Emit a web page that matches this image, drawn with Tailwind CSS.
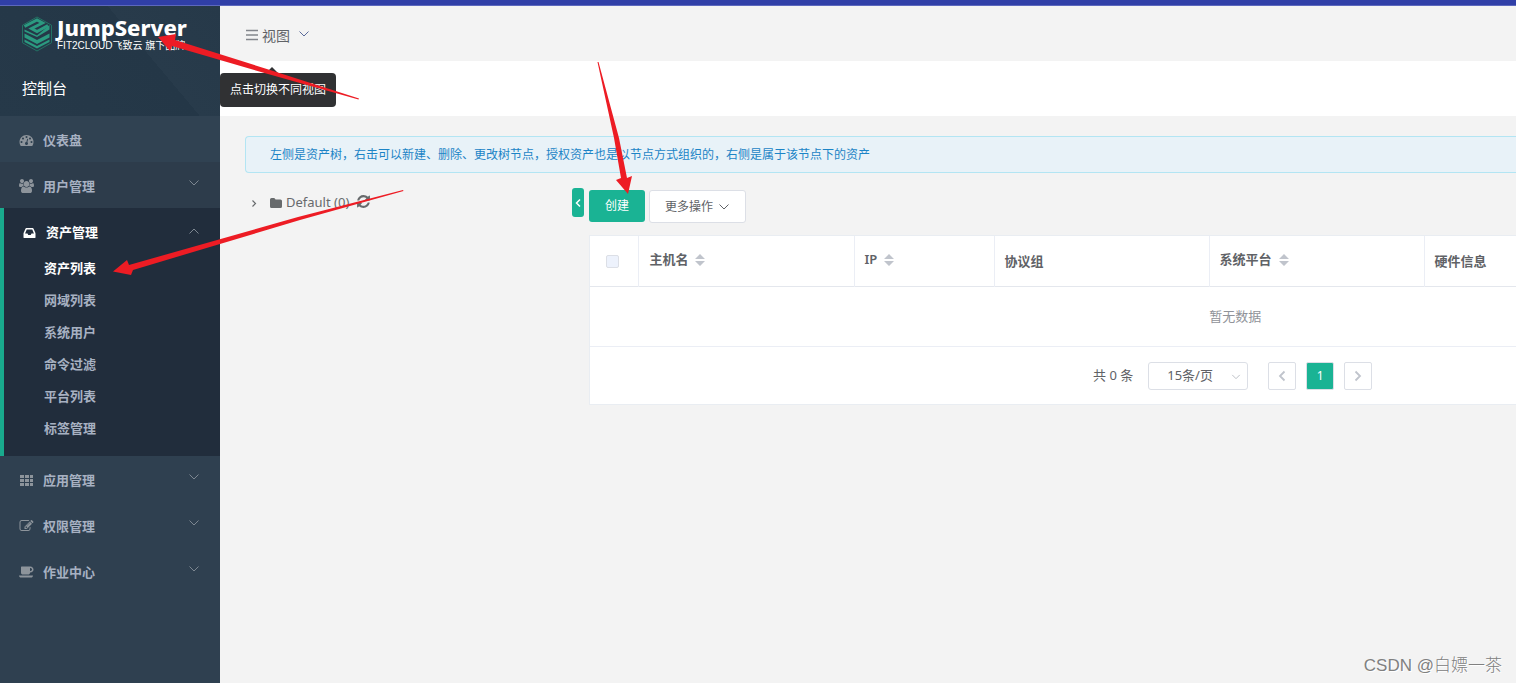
<!DOCTYPE html>
<html lang="zh-CN">
<head>
<meta charset="utf-8">
<title>JumpServer</title>
<meta name="viewport" content="width=device-width, initial-scale=1">
<script src="https://cdn.jsdelivr.net/npm/@tailwindcss/browser@4"></script>
</head>
<body class="relative flex min-h-screen flex-col overflow-x-hidden bg-[#f3f3f3] font-['Noto_Sans','Noto_Sans_CJK_SC',sans-serif] text-[13px] text-[#606266]">
<svg class="hidden" aria-hidden="true">
  <symbol id="down" viewBox="0 0 12 12"><path d="M1.500 3.500 6 8 10.500 3.500" fill="none" stroke="currentColor"/></symbol>
  <symbol id="sort" viewBox="0 0 10 12"><path d="M5 0 10 5H0zM5 12 0 7h10z" fill="#c0c4cc"/></symbol>
</svg>
<div class="h-[6px] shrink-0 border-b border-[#5c68bd] bg-[#303fa7]"></div>
<div class="flex grow">
  <aside class="w-[220px] shrink-0 bg-[#2f4050] font-semibold text-[#a7b1c2]">
    <div class="flex h-[110px] flex-col bg-[linear-gradient(50deg,#263949_0%,#243747_64%,#283b4b_64%,#263949_100%)] font-normal text-white">
      <a href="#" class="flex h-[55px] items-center gap-1 pl-[21px]">
        <svg class="h-[36px] w-[32px] shrink-0" viewBox="0 0 32 36" aria-hidden="true">
          <path d="M16 1 30.500 9.200V26.800L16 35 1.500 26.800V9.200z" fill="none" stroke="#237264"/>
          <path d="M24 8 16 4 4 10.500 8 13 16 9 12 13.500 16 15.500 28 10V14L16 20.500 4 14.500V16L16 22V19.500L25.500 14 21 11.500 14 14.500 20 8z" fill="none"/>
          <path d="M3.500 10.500 16 4 21.500 7 10.500 12.500 16 15.500 27 9.500" fill="none" stroke="#2b9a80" stroke-width="3"/>
          <g fill="#2b9a80"><path d="M3.500 13.500 16 19.500 28.500 9V13.500L16 21 3.500 15.500z"/><path d="M3.500 17.500 16 24 28.500 17.500V21.500L16 28 3.500 21.500z"/><path d="M3.500 23.500 16 30 28.500 23.500V26L16 32.500 3.500 26z"/></g>
        </svg>
        <span class="flex flex-col whitespace-nowrap">
          <span class="text-[22px] leading-[24px] font-extrabold">JumpServer</span>
          <span class="font-['Liberation_Sans','Noto_Sans_CJK_SC',sans-serif] text-[10px] leading-[14px]">FIT2CLOUD飞致云 旗下品牌</span>
        </span>
      </a>
      <div class="flex h-[55px] items-center pl-[22px] text-[15px]">控制台</div>
    </div>
    <nav>
      <a href="#" class="flex h-[46px] items-center gap-[9px] bg-[#304252] pt-1 pr-5 pl-[19px]">
        <svg class="mb-[2px] h-[14px] w-[15px] text-[#8d949b]" viewBox="0 0 1792 1792" fill="currentColor" aria-hidden="true"><path d="M384 1152q0-53-37.500-90.500t-90.500-37.500-90.500 37.500-37.500 90.500 37.500 90.500 90.500 37.500 90.500-37.500 37.500-90.500zm192-448q0-53-37.500-90.500t-90.500-37.500-90.500 37.500-37.500 90.500 37.500 90.500 90.500 37.500 90.500-37.500 37.500-90.500zm428 481l101-382q6-26-7.500-48.500t-38.500-29.500-48 6.500-30 39.500l-101 382q-60 5-107 43.500t-63 98.500q-20 77 20 146t117 89 146-20 89-117q16-60-6-117t-72-91zm660-33q0-53-37.500-90.500t-90.500-37.500-90.500 37.500-37.500 90.500 37.500 90.500 90.500 37.500 90.500-37.500 37.500-90.500zm-640-640q0-53-37.500-90.500t-90.500-37.500-90.500 37.500-37.500 90.500 37.500 90.500 90.500 37.500 90.500-37.500 37.500-90.500zm448 192q0-53-37.500-90.500t-90.500-37.500-90.500 37.500-37.500 90.500 37.500 90.500 90.500 37.500 90.500-37.500 37.500-90.500zm320 448q0 261-141 483-19 29-54 29h-1402q-35 0-54-29-141-221-141-483 0-182 71-348t191-286 286-191 348-71 348 71 286 191 191 286 71 348z"/></svg>
        <span>仪表盘</span>
      </a>
      <a href="#" class="flex h-[46px] items-center gap-[9px] bg-[#2d3c4b] pt-1 pr-5 pl-[19px]">
        <svg class="mb-[2px] h-[14px] w-[15px] text-[#8d949b]" viewBox="0 0 1920 1792" fill="currentColor" aria-hidden="true"><path d="M593 896q-162 5-265 128h-134q-82 0-138-40.500t-56-118.500q0-353 124-353 6 0 43.500 21t97.500 42.500 119 21.500q67 0 133-23-5 37-5 66 0 139 81 256zm1071 637q0 120-73 189.500t-194 69.500h-874q-121 0-194-69.500t-73-189.500q0-53 3.500-103.500t14-109 26.500-108.500 43-97.500 62-81 85.500-53.500 111.500-20q10 0 43 21.500t73 48 107 48 135 21.500 135-21.500 107-48 73-48 43-21.500q61 0 111.500 20t85.500 53.500 62 81 43 97.500 26.500 108.500 14 109 3.500 103.500zm-1024-1277q0 106-75 181t-181 75-181-75-75-181 75-181 181-75 181 75 75 181zm704 384q0 159-112.500 271.500t-271.500 112.500-271.500-112.500-112.500-271.500 112.500-271.500 271.500-112.500 271.500 112.500 112.500 271.500zm576 225q0 78-56 118.500t-138 40.500h-134q-103-123-265-128 81-117 81-256 0-29-5-66 66 23 133 23 59 0 119-21.500t97.500-42.500 43.500-21q124 0 124 353zm-128-609q0 106-75 181t-181 75-181-75-75-181 75-181 181-75 181 75 75 181z"/></svg>
        <span>用户管理</span><svg class="mb-2 ml-auto size-3 text-[#7d8791]" aria-hidden="true"><use href="#down"/></svg>
      </a>
      <div class="border-l-4 border-[#19aa8d] bg-[#212d3c] pb-[11px]">
        <a href="#" class="flex h-[45px] items-center gap-[9px] pt-1 pr-5 pl-[18px] text-white">
          <svg class="h-[14px] w-[15px]" viewBox="0 0 1792 1792" fill="currentColor" aria-hidden="true"><path d="M1151 960h316q-1-3-2.500-8.500t-2.500-7.500l-212-496h-708l-212 496q-1 3-2.500 8.500t-2.500 7.500h316l95 192h320zm513 30v482q0 26-19 45t-45 19h-1408q-26 0-45-19t-19-45v-482q0-62 25-123l238-552q10-25 36.500-42t52.500-17h832q26 0 52.500 17t36.500 42l238 552q25 61 25 123z"/></svg>
          <span>资产管理</span><svg class="mb-1 ml-auto size-3 rotate-180 text-[#7d8791]" aria-hidden="true"><use href="#down"/></svg>
        </a>
        <a href="#" class="flex h-8 items-center pl-10 text-white">资产列表</a>
        <a href="#" class="flex h-8 items-center pl-10">网域列表</a>
        <a href="#" class="flex h-8 items-center pl-10">系统用户</a>
        <a href="#" class="flex h-8 items-center pl-10">命令过滤</a>
        <a href="#" class="flex h-8 items-center pl-10">平台列表</a>
        <a href="#" class="flex h-8 items-center pl-10">标签管理</a>
      </div>
      <a href="#" class="flex h-[46px] items-center gap-[9px] pt-1 pr-5 pl-[19px]">
        <svg class="mb-[2px] h-[13px] w-[15px] text-[#8d949b]" viewBox="0 0 15 13" fill="currentColor" aria-hidden="true"><path d="M1 1h4v3H1zM6 1h4v3H6zM11 1h3v3h-3zM1 5h4v3H1zM6 5h4v3H6zM11 5h3v3h-3zM1 9h4v3H1zM6 9h4v3H6zM11 9h3v3h-3z"/></svg>
        <span>应用管理</span><svg class="mb-2 ml-auto size-3 text-[#7d8791]" aria-hidden="true"><use href="#down"/></svg>
      </a>
      <a href="#" class="flex h-[46px] items-center gap-[9px] pt-1 pr-5 pl-[19px]">
        <svg class="mb-[2px] h-[14px] w-[15px] text-[#8d949b]" viewBox="0 0 1792 1792" fill="currentColor" aria-hidden="true"><path d="M888 1184l116-116-152-152-116 116v56h96v96h56zm440-720q-16-16-33 1l-350 350q-17 17-1 33t33-1l350-350q17-17 1-33zm80 594v190q0 119-84.500 203.500t-203.500 84.500h-832q-119 0-203.500-84.500t-84.500-203.500v-832q0-119 84.500-203.500t203.500-84.500h832q63 0 117 25 15 7 18 23 3 17-9 29l-49 49q-14 14-32 8-23-6-45-6h-832q-66 0-113 47t-47 113v832q0 66 47 113t113 47h832q66 0 113-47t47-113v-126q0-13 9-22l64-64q15-15 35-7t20 29zm-96-738l288 288-672 672h-288v-288zm444 132l-92 92-288-288 92-92q28-28 68-28t68 28l152 152q28 28 28 68t-28 68z"/></svg>
        <span>权限管理</span><svg class="mb-2 ml-auto size-3 text-[#7d8791]" aria-hidden="true"><use href="#down"/></svg>
      </a>
      <a href="#" class="flex h-[46px] items-center gap-[9px] pt-1 pr-5 pl-[19px]">
        <svg class="mb-[2px] h-[14px] w-[15px] text-[#8d949b]" viewBox="0 0 1920 1792" fill="currentColor" aria-hidden="true"><path d="M1664 576q0-80-56-136t-136-56h-64v384h64q80 0 136-56t56-136zm-1664 768h1792q0 106-75 181t-181 75h-1280q-106 0-181-75t-75-181zm1856-768q0 159-112.500 271.500t-271.500 112.500h-64v32q0 92-66 158t-158 66h-704q-92 0-158-66t-66-158v-736q0-26 19-45t45-19h1152q159 0 271.500 112.500t112.500 271.500z"/></svg>
        <span>作业中心</span><svg class="mb-2 ml-auto size-3 text-[#7d8791]" aria-hidden="true"><use href="#down"/></svg>
      </a>
    </nav>
  </aside>

  <div class="flex min-w-0 grow flex-col">
    <header class="flex h-[55px] items-center pt-1 pl-[26px]">
      <div class="relative">
        <button type="button" aria-describedby="view-tip" class="flex items-center text-[14px] text-[#606266]">
          <svg class="mr-1 mb-[2px] h-3 w-3" viewBox="0 0 12 12" aria-hidden="true"><path d="M0 1.500h12M0 6h12M0 10.500h12" stroke="#83868c" stroke-width="1.600"/></svg>
          <span>视图</span><svg class="mb-1 ml-2 size-3 text-[#5a6a9a]" aria-hidden="true"><use href="#down"/></svg>
        </button>
        <div id="view-tip" role="tooltip" class="absolute top-[48px] left-[-26px] z-10 flex h-[34px] w-[116px] items-center justify-center rounded-[4px] bg-[#303133] text-[12px] whitespace-nowrap text-white">
          <svg class="absolute top-[-6px] left-[46px] h-[6px] w-3" viewBox="0 0 12 6" aria-hidden="true"><path d="M0 6 6 0l6 6z" fill="#303133"/></svg>
          点击切换不同视图
        </div>
      </div>
    </header>
    <div class="h-[55px] bg-white"></div>
    <main class="min-w-0 grow overflow-hidden pt-5 pl-[25px]">
      <div role="alert" class="flex h-[37px] items-center rounded-l-[4px] border border-r-0 border-[#b3e5f3] bg-[#e8f2f8] pl-6 text-[12px] text-[#1c84c6]">左侧是资产树，右击可以新建、删除、更改树节点，授权资产也是以节点方式组织的，右侧是属于该节点下的资产</div>
      <div class="flex pt-[15px]">
        <div class="flex h-[29px] w-[327px] shrink-0 items-center pl-1 text-[#676a6c]">
          <svg class="mr-2 size-[10px]" viewBox="0 0 10 10" aria-hidden="true"><path d="M3.500 2.500 6.500 5.500 3.500 8.500" fill="none" stroke="currentColor" stroke-width="1.200"/></svg>
          <svg class="mx-[3px] h-[10px] w-[12px]" viewBox="0 0 12 10" aria-hidden="true"><path d="M0 1.500Q0 0 1.500 0H4Q5 0 5.500 1.500H10.500Q12 1.500 12 3V8.500Q12 10 10.500 10H1.500Q0 10 0 8.500z" fill="currentColor"/></svg>
          <a href="#" class="ml-[1px]">Default (0)</a>
          <button type="button" aria-label="刷新" class="mb-[2px] ml-[7px]"><svg class="size-[15px]" viewBox="0 0 1792 1792" fill="currentColor" aria-hidden="true"><path d="M1639 1056q0 5-1 7-64 268-268 434.500t-478 166.500q-146 0-282.500-55t-243.500-157l-129 129q-19 19-45 19t-45-19-19-45v-448q0-26 19-45t45-19h448q26 0 45 19t19 45-19 45l-137 137q71 66 161 102t187 36q134 0 250-65t186-179q11-17 53-117 8-23 30-23h192q13 0 22.500 9.500t9.500 22.500zm25-800v448q0 26-19 45t-45 19h-448q-26 0-45-19t-19-45 19-45l138-138q-148-137-349-137-134 0-250 65t-186 179q-11 17-53 117-8 23-30 23h-199q-13 0-22.500-9.500t-9.500-22.500v-7q65-268 270-434.500t480-166.500q146 0 284 55.500t245 156.500l130-129q19-19 45-19t45 19 19 45z"/></svg></button>
        </div>
        <button type="button" aria-label="收起" class="mr-[5px] flex h-[29px] w-3 shrink-0 items-center justify-center rounded-[3px] bg-[#1ab394] text-white"><svg class="h-[10px] w-2" viewBox="0 0 8 10" aria-hidden="true"><path d="M6 1.500 2.500 5 6 8.500" fill="none" stroke="currentColor" stroke-width="1.500"/></svg></button>
        <section class="min-w-0 grow pt-[2px]">
          <div class="flex items-start gap-1">
            <button type="button" class="h-8 w-[56px] rounded-[3px] bg-[#1ab394] text-[12px] text-white">创建</button>
            <button type="button" class="flex h-[33px] w-[97px] items-center justify-center gap-1 rounded-[3px] border border-[#dcdfe6] bg-white text-[12px]">更多操作<svg class="ml-[1px] size-3" aria-hidden="true"><use href="#down"/></svg></button>
          </div>
          <div class="mt-3 overflow-hidden border border-r-0 border-[#e9edf2] bg-white">
            <div class="w-[1291px]">
              <table class="w-full table-fixed border-collapse text-left">
                <colgroup><col class="w-12"><col class="w-[216px]"><col class="w-[140px]"><col class="w-[215px]"><col class="w-[215px]"><col></colgroup>
                <thead>
                  <tr class="h-[50px] border-b border-[#e4e7ed] [&>th]:border-r [&>th]:border-[#ebeef5] [&>th]:font-semibold">
                    <th class="pt-[2px] pl-4"><input type="checkbox" disabled aria-label="全选" class="block size-[13px] appearance-none rounded-[2px] border border-[#dcdfe6] bg-[#edf2fc]"></th>
                    <th class="pb-[2px] pl-[11px]"><button type="button" class="flex items-center gap-[6px]">主机名<svg class="h-3 w-[10px]" aria-hidden="true"><use href="#sort"/></svg></button></th>
                    <th class="pb-[2px] pl-[10px]"><button type="button" class="flex items-center gap-[7px]">IP<svg class="h-3 w-[10px]" aria-hidden="true"><use href="#sort"/></svg></button></th>
                    <th class="pt-[2px] pl-[10px]">协议组</th>
                    <th class="pb-[2px] pl-[10px]"><button type="button" class="flex items-center gap-[7px]">系统平台<svg class="h-3 w-[10px]" aria-hidden="true"><use href="#sort"/></svg></button></th>
                    <th class="pt-[2px] pl-[10px]">硬件信息</th>
                  </tr>
                </thead>
                <tbody><tr class="h-[60px] border-b border-[#ebeef5]"><td colspan="6" class="pt-[2px] text-center text-[#909399]">暂无数据</td></tr></tbody>
              </table>
              <div class="flex h-[57px] items-center pt-[2px] pl-[503px]">
                <span class="mr-[15px]">共 0 条</span>
                <span class="relative mr-5 flex">
                  <select aria-label="每页条数" class="h-7 w-[100px] appearance-none rounded-[3px] border border-[#dcdfe6] bg-white pl-[18px] text-[13px]"><option>15条/页</option></select>
                  <svg class="pointer-events-none absolute top-[10px] right-[7px] size-[10px] text-[#b0b4bc]" aria-hidden="true"><use href="#down"/></svg>
                </span>
                <div class="flex gap-[10px]">
                  <button type="button" disabled aria-label="上一页" class="flex size-7 items-center justify-center rounded-[2px] border border-[#dcdfe6] text-[#c0c4cc]"><svg class="size-3" viewBox="0 0 12 12" aria-hidden="true"><path d="M8.500 1.500 4 6l4.500 4.500" fill="none" stroke="currentColor" stroke-width="1.800"/></svg></button>
                  <button type="button" class="size-7 rounded-[2px] border border-[#dcdfe6] bg-[#1ab394] text-[12px] text-white">1</button>
                  <button type="button" disabled aria-label="下一页" class="flex size-7 items-center justify-center rounded-[2px] border border-[#dcdfe6] text-[#c0c4cc]"><svg class="size-3" viewBox="0 0 12 12" aria-hidden="true"><path d="M3.500 1.500 8 6l-4.500 4.500" fill="none" stroke="currentColor" stroke-width="1.800"/></svg></button>
                </div>
              </div>
            </div>
          </div>
        </section>
      </div>
    </main>
  </div>
</div>
<!-- Annotation arrows drawn over the page -->
<svg class="pointer-events-none absolute top-0 left-0 z-20 h-[300px] w-[660px]" viewBox="0 0 660 300" fill="#ed1c24" aria-hidden="true">
  <path d="M158 37 176 34 175 40 270 70 359 98.500 358.500 99.500 268 74 172 46 170 51z"/>
  <path d="M403 190 403.500 191 300 220 133 270 131 275 113 271.500 127 260 129 265 298 217z"/>
  <path d="M597.500 62 598.500 62 619 138 627 178 632 176 628 194 616 180 621 178 614 138z"/>
</svg>
<div class="absolute right-[14px] bottom-[5px] font-['Liberation_Sans','Noto_Sans_CJK_SC',sans-serif] text-[17px] font-light text-[#808080] [text-shadow:1px_1px_0_#fff]">CSDN @白嫖一茶</div>
</body>
</html>
